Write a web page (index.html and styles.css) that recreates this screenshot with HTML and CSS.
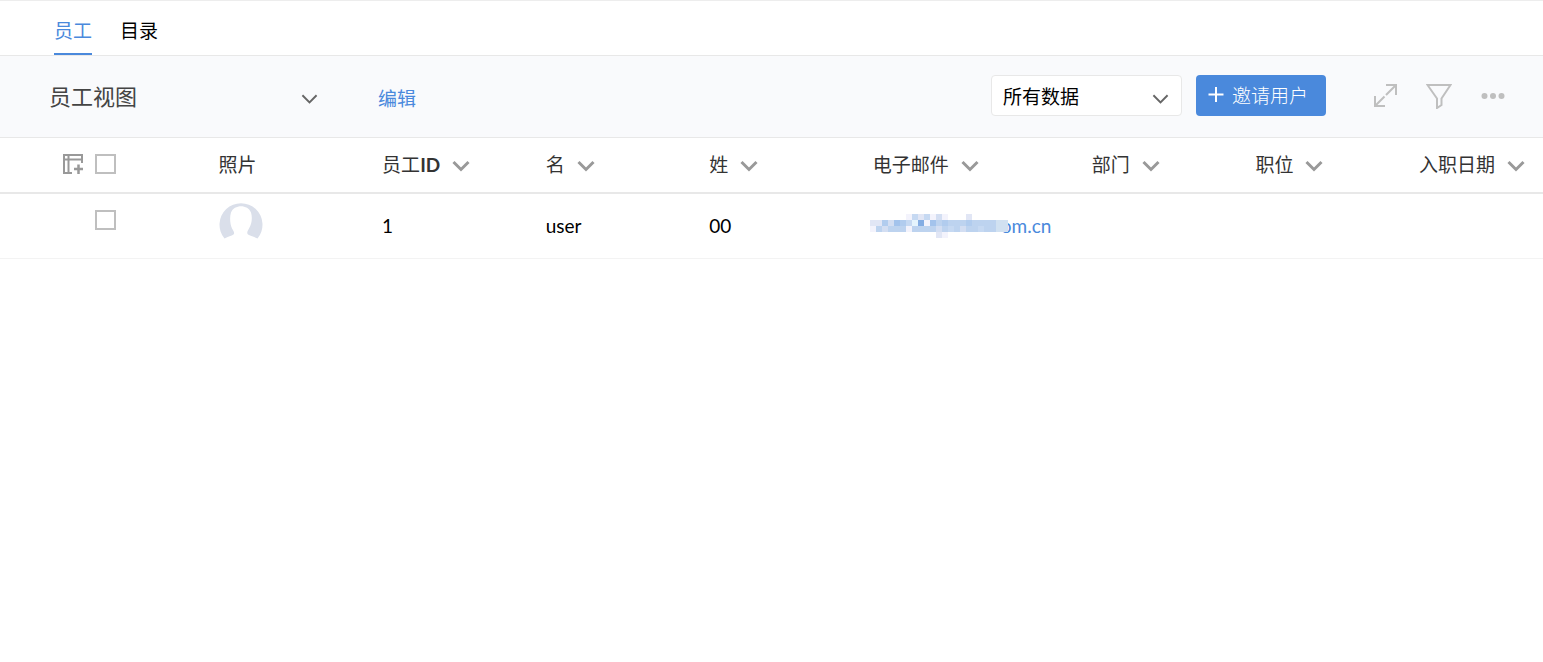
FILE: index.html
```html
<!DOCTYPE html>
<html lang="zh-CN">
<head>
    <meta charset="UTF-8">
    <title>员工</title>
    <link rel="stylesheet" href="styles.css">
</head>
<body>
    <svg class="symbols" aria-hidden="true">
        <symbol id="chevron" viewBox="0 0 18 12">
            <path d="M1.5 2L9 9.5L16.5 2" fill="none" stroke="currentColor"/>
        </symbol>
    </svg>

    <nav class="tabs">
        <a class="tab active" href="#employees">员工</a>
        <a class="tab" href="#directory">目录</a>
    </nav>

    <div class="toolbar">
        <div class="view-select">
            <select class="view-name" aria-label="视图">
                <option>员工视图</option>
            </select>
            <svg class="select-arrow"><use href="#chevron"/></svg>
        </div>
        <a class="edit-link" href="#edit">编辑</a>
        <div class="actions">
            <div class="data-select">
                <select class="data-filter" aria-label="数据范围">
                    <option>所有数据</option>
                </select>
                <svg class="select-arrow"><use href="#chevron"/></svg>
            </div>
            <button class="invite" type="button">
                <svg width="16" height="20" viewBox="0 0 16 20"><path d="M8 1V16M0.5 8.500H15.500" stroke="#fff" stroke-width="2"/></svg>
                <span>邀请用户</span>
            </button>
            <div class="tools">
                <button class="tool" type="button" aria-label="展开">
                    <svg width="26" height="26" viewBox="0 0 26 26" fill="none" stroke="currentColor" stroke-width="2"><path d="M14 2H24V12M24 2L14 12M3 13V23H13M3 23L12.500 13.500"/></svg>
                </button>
                <button class="tool" type="button" aria-label="筛选">
                    <svg width="26" height="26" viewBox="0 0 26 26" fill="none" stroke="currentColor" stroke-width="2"><path d="M1.500 2H24.500L15.500 15.500V22L11 25V15.500Z"/></svg>
                </button>
                <button class="tool" type="button" aria-label="更多">
                    <svg width="26" height="26" viewBox="0 0 26 26" fill="currentColor"><circle cx="4.500" cy="13" r="3"/><circle cx="13" cy="13" r="3"/><circle cx="21.500" cy="13" r="3"/></svg>
                </button>
            </div>
        </div>
    </div>

    <table class="grid">
        <colgroup>
            <col class="col-check">
            <col class="col">
            <col class="col">
            <col class="col">
            <col class="col">
            <col class="col-mail">
            <col class="col">
            <col class="col">
            <col>
        </colgroup>
        <thead>
            <tr>
                <th>
                    <div class="picker">
                        <button class="add-column" type="button" aria-label="添加列">
                            <svg width="22" height="22" viewBox="0 0 22 22" fill="none" stroke="currentColor" stroke-width="2"><path d="M20 10V2H2V20H10M1 6.500H21M6.500 2V20"/><path d="M16.500 11.500V21M12 16H21" stroke-width="2.500"/></svg>
                        </button>
                        <input class="check" type="checkbox" aria-label="全选">
                    </div>
                </th>
                <th>照片</th>
                <th>员工<b>ID</b><svg class="sort"><use href="#chevron"/></svg></th>
                <th>名<svg class="sort"><use href="#chevron"/></svg></th>
                <th>姓<svg class="sort"><use href="#chevron"/></svg></th>
                <th>电子邮件<svg class="sort"><use href="#chevron"/></svg></th>
                <th>部门<svg class="sort"><use href="#chevron"/></svg></th>
                <th>职位<svg class="sort"><use href="#chevron"/></svg></th>
                <th>入职日期<svg class="sort"><use href="#chevron"/></svg></th>
            </tr>
        </thead>
        <tbody>
            <tr>
                <td><div class="picker"><input class="check" type="checkbox" aria-label="选择 user"></div></td>
                <td>
                    <svg class="avatar" width="44" height="44" viewBox="0 0 44 44">
                        <path d="M5.500 36.500A21.500 21.500 0 1 1 38.500 36.500C34.500 34.500 31 34 29 32.500C27.500 31 28.500 29 30 26.500C33 22 33.500 15 32 10.500C29 2 15 2 12 10.500C10.500 15 11 22 13 26.500C14.500 29 16 31 14.500 32.500C12.500 34 9 34.500 5.500 36.500Z" fill="#dadfea"/>
                    </svg>
                </td>
                <td>1</td>
                <td>user</td>
                <td>00</td>
                <td>
                    <a class="mail" href="#mail"><svg class="mosaic" width="138" height="24" viewBox="0 0 23 4" shape-rendering="crispEdges">
                        <path fill="#bdd3ef" d="M0 1H23V3H0Z"/>
                        <path fill="#c6d9f2" d="M7 0h1v1h-1zM9 0h1v1h-1zM6 1h1v1h-1zM18 2h1v1h-1zM13 2h1v1h-1z"/>
                        <path fill="#e1e6f5" d="M0 1h2v1h-2zM8 0h1v1h-1zM16 0h1v1h-1zM11 3h1v1h-1z"/>
                        <path fill="#d3def2" d="M3 1h1v1h-1zM2 2h1v1h-1zM11 0h1v1h-1zM11 2h1v1h-1zM15 2h1v1h-1z"/>
                        <path fill="#f3f3fc" d="M6 0h1v1h-1zM10 0h1v1h-1zM12 0h1v1h-1zM9 1h1v1h-1zM0 2h1v1h-1zM6 2h1v1h-1zM12 3h1v1h-1z"/>
                        <path fill="#a3c3ec" d="M4 1h1v1h-1zM10 1h1v1h-1z"/>
                        <path fill="#b1ccee" d="M2 1h1v1h-1zM5 1h1v1h-1zM12 1h1v1h-1zM16 1h1v1h-1z"/>
                        <path fill="#e5f4fd" d="M7 1h1v1h-1z"/>
                        <path fill="#84ade3" d="M8 1h1v1h-1z"/>
                        <path fill="#d1e1f1" d="M21 1h2v2h-2z"/>
                    </svg>om.cn</a>
                </td>
                <td></td>
                <td></td>
                <td></td>
            </tr>
        </tbody>
    </table>
</body>
</html>
```
FILE: styles.css
```css
* {
    box-sizing: border-box;
}

body {
    margin: 0;
    background: #fff;
    color: #000;
    font-family: Lato, "Noto Sans CJK SC", sans-serif;
    font-size: 19px;
    line-height: 28px;
}

a {
    color: #4a89dc;
    text-decoration: none;
}

button {
    padding: 0;
    border: 0;
    background: none;
    font: inherit;
    cursor: pointer;
}

svg {
    display: block;
}

.symbols {
    position: absolute;
    width: 0;
    height: 0;
}

.tabs {
    display: flex;
    gap: 28px;
    height: 56px;
    padding: 0 54px;
    border-top: 1px solid #ededed;
    border-bottom: 1px solid #e8e8e8;
}

.tab {
    padding-top: 16px;
    color: #000;
}

.tab.active {
    border-bottom: 2px solid #4a89dc;
    color: #4a89dc;
}

.toolbar {
    display: flex;
    align-items: center;
    height: 82px;
    padding: 0 37px 2px 49px;
    background: #f9fafc;
    border-bottom: 1px solid #e8e8e8;
}

.view-select,
.data-select {
    position: relative;
    color: #666;
}

.view-select {
    width: 269px;
    margin-right: 60px;
}

select {
    width: 100%;
    appearance: none;
    border: 0;
    background: none;
    font: inherit;
}

.view-name {
    padding: 4px 0 0;
    color: #444;
    font-size: 22px;
}

.select-arrow {
    position: absolute;
    top: 50%;
    right: 0;
    width: 17px;
    height: 12px;
    margin-top: -3px;
    stroke-width: 2;
    pointer-events: none;
}

.edit-link {
    padding-top: 6px;
}

.actions {
    display: flex;
    gap: 14px;
    margin-left: auto;
}

.data-select {
    width: 191px;
}

.data-filter {
    height: 41px;
    padding: 2px 11px 0;
    border: 1px solid #e8e8e8;
    border-radius: 4px;
    background: #fff;
    color: #000;
}

.data-select .select-arrow {
    right: 13px;
}

.invite {
    display: flex;
    align-items: center;
    gap: 8px;
    height: 41px;
    padding: 0 18px 0 12px;
    border-radius: 4px;
    background: #4a89dc;
    color: #fff;
    font-weight: 300;
}

.tools {
    display: flex;
    align-items: center;
    gap: 28px;
    margin-left: 32px;
}

.tool {
    color: #bfbfbf;
}

.grid {
    width: 100%;
    table-layout: fixed;
    border-collapse: collapse;
}

.col-check {
    width: 14.1%;
}

.col {
    width: 10.6%;
}

.col-mail {
    width: 14.2%;
}

th,
td {
    padding: 0 0 0 1px;
    text-align: left;
    white-space: nowrap;
}

th {
    height: 55px;
    border-bottom: 2px solid #e8e8e8;
    color: #333;
    font-weight: 400;
}

td {
    height: 65px;
    border-bottom: 1px solid #f3f3f3;
}

.picker {
    display: flex;
    align-items: center;
    justify-content: flex-end;
    gap: 11px;
    padding-right: 102px;
}

th .picker {
    padding-bottom: 2px;
}

td .picker {
    padding-bottom: 11px;
}

.add-column {
    color: #999;
}

.check {
    width: 21px;
    height: 20px;
    margin: 0;
    appearance: none;
    border: 2px solid #bfbfbf;
    background: #fff;
}

.check:checked {
    background: #4a89dc;
}

.avatar {
    margin-bottom: 4px;
}

.sort {
    display: inline-block;
    width: 18px;
    height: 12px;
    margin-left: 12px;
    color: #999;
    stroke-width: 3;
}

.mail {
    display: flex;
    align-items: center;
    margin-left: -3px;
}

.mosaic {
    position: relative;
    margin-right: -7px;
}
```
